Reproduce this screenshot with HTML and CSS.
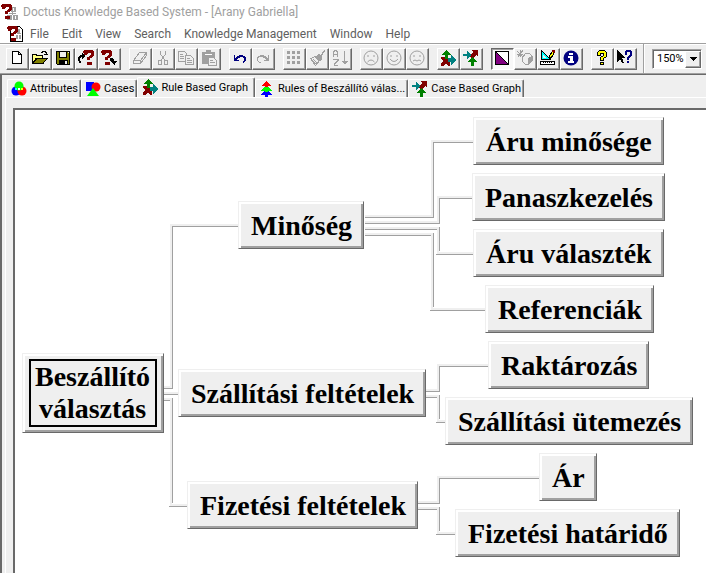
FILE: index.html
```html
<!DOCTYPE html>
<html lang="en">

<head>
  <meta charset="UTF-8">
  <meta name="viewport" content="width=device-width, initial-scale=1.0">
  <title>Doctus Knowledge Based System</title>

  <link rel="stylesheet" href="styles.css">
</head>

<body>
  <!-- Shapes used by more than one icon -->
  <svg class="shapes" aria-hidden="true">
    <symbol id="mark" viewBox="0 0 12 16">
      <path d="M1 0h9v1h1v5h-1v1H9v1H7v2H4V7h2V6h1V5h1V3H5v1H4v1H1V3H0V1h1zM4 12h5v3H4z" />
    </symbol>
    <symbol id="arrows" viewBox="0 0 16 16">
      <path fill="#800000" d="M1 7h6v2l3 3v4H8l-2-2-3 2H1v-3l2-2-2-2z" />
      <path fill="#008000" d="M6 0l5 5H8v4H5V5H1z" />
      <path fill="#008080" d="M11 5l5 5-5 5v-3H8V8h3z" />
    </symbol>
    <symbol id="arrows-in" viewBox="0 0 16 16">
      <path fill="#800000" d="M8 0h7v7l-2-2-4 4-3-3 4-4z" />
      <path fill="#008080" d="M0 4h4V1l4 4-4 4V6H0z" />
      <path fill="#008000" d="M9 7l5 5h-3v4H8v-4H4z" />
    </symbol>
  </svg>

  <header class="title-bar">
    <svg class="app-icon" viewBox="0 0 18 18">
      <g fill="#a0a0a0">
        <path d="M10 4h5v5h-5zM6 12h5v5H6zM12 12h5v5h-5zM11 9h1v3h-1zM8 10h7v1H8z" />
      </g>
      <path fill="#fff" d="M12 5h1v3h-1zM8 13h1v3H8zM14 13h1v3h-1z" />
      <use href="#mark" x="0" y="1" width="12" height="16" fill="#800000" />
    </svg>
    <span>Doctus Knowledge Based System - [Arany Gabriella]</span>
  </header>

  <nav class="menu-bar">
    <svg class="doc-icon" viewBox="0 0 16 16">
      <path fill="#fff" stroke="#000" d="M3.500 .5h9l3 3v12h-12z" />
      <path fill="#a0a0a0" d="M10 3h3v4h-3zM9 9h2v4H9zM12 9h2v4h-2zM10 7h4v1h-4z" />
      <use href="#mark" width="12" height="16" fill="#800000" />
    </svg>
    <button>File</button>
    <button>Edit</button>
    <button>View</button>
    <button>Search</button>
    <button>Knowledge Management</button>
    <button>Window</button>
    <button>Help</button>
  </nav>

  <div class="toolbar">
    <div class="group">
      <button aria-label="New"><svg viewBox="0 0 16 16">
        <path fill="#fff" stroke="#000" d="M3.500 1.500h6l3 3v9h-9zM9.500 1.500v3h3" />
      </svg></button>
      <button aria-label="Open"><svg viewBox="0 0 16 16">
        <path fill="#ffff80" stroke="#000" d="M.5 13.500v-9h4v1h6v3H4z" />
        <path fill="#808000" stroke="#000" d="M1 13.500l4-5h10l-4 5z" />
        <path fill="none" stroke="#000" d="M9 2.500h1v-1h3v1h1v2M12 4.500h4M14.500 2v3" />
      </svg></button>
      <button aria-label="Save"><svg viewBox="0 0 16 16">
        <path fill="#808000" stroke="#000" d="M1.500 1.500h13v13h-12l-1-1z" />
        <path fill="#efefef" stroke="#000" d="M4.500 1.500h7v6h-7z" />
        <path d="M4 10h9v5H4z" />
        <path fill="#efefef" d="M10 11h2v3h-2zM13 2h1v1h-1z" />
      </svg></button>
      <button aria-label="Load knowledge base"><svg viewBox="0 0 16 16">
        <use href="#mark" x="5" y="0" width="12" height="16" fill="#800000" />
        <path d="M1 13v-2H0V7h1V6h1V5h2V3h1v1h1v1h1v2H6v1H5v1H4V7H3v1H2v3h1v2z" />
      </svg></button>
      <button aria-label="Save knowledge base"><svg viewBox="0 0 16 16">
        <use href="#mark" x="0" y="0" width="12" height="16" fill="#800000" />
        <path d="M9 8h3v1h1v2h3v1h-1v1h-1v2h-1v-1h-1v-1h-1v-1h-1v-1H9z" />
      </svg></button>
    </div>

    <div class="group">
      <button disabled aria-label="Erase"><svg viewBox="0 0 16 16">
        <path d="M1.500 10.500l6-8h7l-6 8zM1.500 10.500v3h7v-3M8.500 13.500l6-8v-3" />
      </svg></button>
      <button disabled aria-label="Cut"><svg viewBox="0 0 16 16">
        <path d="M5.500 1v3l4 6M10.500 1v3l-4 6M3.500 10.500h3v4h-3zM9.500 10.500h3v4h-3z" />
      </svg></button>
      <button disabled aria-label="Copy"><svg viewBox="0 0 16 16">
        <path d="M.5 1.500h6l2 2v8h-8zM2 4.500h3M2 6.500h4M2 8.500h4" />
        <path class="paper" d="M7.500 5.500h5l3 3v6h-8zM9 8.500h3M9 10.500h5M9 12.500h5" />
      </svg></button>
      <button disabled aria-label="Paste"><svg viewBox="0 0 16 16">
        <path class="solid" d="M1 2h13v12H1zM5 0h5v3H5z" />
        <path class="paper" d="M7.500 7.500h5l3 3v5h-8zM9 10.500h3M9 12.500h5" />
        <path class="light" d="M4 4h7" />
      </svg></button>
    </div>

    <div class="group">
      <button aria-label="Undo"><svg viewBox="0 0 16 16">
        <path fill="#000080" d="M2 5h1v3h1V7h1V6h2V5h4v1h2v1h1v4h-1v1h-1v1h-1v-2h1V8h-1V7H8v1H6v1H5v1h2v1H2z" />
      </svg></button>
      <button disabled aria-label="Redo"><svg viewBox="0 0 16 16">
        <path class="solid" d="M14 5h-1v3h-1V7h-1V6H9V5H5v1H3v1H2v4h1v1h1v1h2v-1H4v-1H3V8h1V7h4v1h2v1h1v1H9v1h5z" />
      </svg></button>
    </div>

    <div class="group">
      <button disabled aria-label="Grid"><svg viewBox="0 0 16 16">
        <path class="solid" d="M1 1h3v3H1zM6 1h3v3H6zM11 1h3v3h-3zM1 6h3v3H1zM6 6h3v3H6zM11 6h3v3h-3zM1 11h3v3H1zM6 11h3v3H6zM11 11h3v3h-3z" />
      </svg></button>
      <button disabled aria-label="Format"><svg viewBox="0 0 16 16">
        <path d="M1.500 8.500l5-2 4 4-4 5zM4 9l4 4M3 10l4 4M6 7l4 4" />
        <path class="solid" d="M7 6l2-2 3 1 3-5 1 1-3 5v3l-2 2z" />
      </svg></button>
      <button disabled aria-label="Sort"><svg viewBox="0 0 16 16">
        <path d="M1.500 7V2.500l1-2h2l1 2V7M1 4.500h5M1 9.500h5v1l-4 4v1h4M12.500 1v13" />
        <path class="solid" d="M10 11h6l-3 4z" />
      </svg></button>
    </div>

    <div class="group">
      <button disabled aria-label="Bad"><svg class="round" viewBox="0 0 16 16">
        <circle cx="8" cy="8" r="7" />
        <path d="M5 5v2M11 5v2M4.500 12q3.500-4 7 0" />
      </svg></button>
      <button disabled aria-label="Good"><svg class="round" viewBox="0 0 16 16">
        <circle cx="8" cy="8" r="7" />
        <path d="M5 5v2M11 5v2M4 9q4 5 8 0" />
      </svg></button>
      <button disabled aria-label="Uncertain"><svg class="round" viewBox="0 0 16 16">
        <circle cx="8" cy="8" r="7" />
        <path d="M5 5v2M11 5v2M4 11l2-1 2 1 2-1 2 1" />
      </svg></button>
    </div>

    <div class="group">
      <button aria-label="Rule based graph"><svg viewBox="0 0 16 16"><use href="#arrows" width="16" height="16" /></svg></button>
      <button aria-label="Case based graph"><svg viewBox="0 0 16 16"><use href="#arrows-in" width="16" height="16" /></svg></button>
    </div>

    <div class="group">
      <button class="pressed" aria-label="Contrast"><svg viewBox="0 0 16 16">
        <path fill="#fff" stroke="#000" d="M1.500 1.500h13v13z" />
        <path fill="#800080" stroke="#000" d="M1.500 1.500v13h13z" />
      </svg></button>
      <button disabled aria-label="Explore"><svg viewBox="0 0 16 16">
        <path d="M0 1l6 6M6 0L1 7M3 0v7M0 4h6" />
        <path d="M5.500 7.500l3-4h4l3 3v4l-4 4h-3l-3-3z" />
        <path class="solid" d="M11 8l4-2v5l-4 4z" />
      </svg></button>
      <button aria-label="Design"><svg viewBox="0 0 16 16">
        <path fill="#00ffff" stroke="#000" d="M1.500 .5v9h9z" />
        <path fill="#efefef" d="M3 5v3h3z" />
        <path fill="#fff" stroke="#000" d="M.5 11.500h14v3H.5zM3.500 12v1M5.500 12v1M7.500 12v1M9.500 12v1M11.500 12v1" />
        <path fill="#ffff00" stroke="#000" d="M9.500 8.500v-3l3-4 2 1-3 5z" />
        <path fill="#800000" d="M12 0h3v3h-2z" />
      </svg></button>
      <button aria-label="Information"><svg class="round" viewBox="0 0 16 16">
        <circle class="info" cx="8" cy="8" r="7.500" />
        <path fill="#fff" d="M6 3h4v2H6zM5 6h5v5h1v2H5v-2h2V8H5z" />
      </svg></button>
    </div>

    <div class="group">
      <button aria-label="Help"><svg viewBox="0 0 16 16">
        <path fill="#ffff00" stroke="#000" d="M3.500 2.500l2-2h5l2 2v4l-3 2v2h-3v-3l3-2v-2h-3v2h-3zM6.500 12.500h3v2h-3z" />
      </svg></button>
      <button aria-label="Context help"><svg viewBox="0 0 16 16">
        <path d="M0 0l8 8H5l2 5H5L3 9l-3 3z" />
        <path fill="#000080" d="M8 1h1V0h5v1h1v5h-1v1h-1v1h-1v2h-2V7h1V6h1V5h1V2h-3v3H8zM10 11h2v2h-2z" />
      </svg></button>
    </div>

    <div class="zoom-box">
      <div class="combo">
        <select aria-label="Zoom">
          <option>100%</option>
          <option selected>150%</option>
          <option>200%</option>
        </select>
        <span class="combo-arrow"><svg viewBox="0 0 7 4"><path d="M0 0h7v1H6v1H5v1H4v1H3V3H2V2H1V1H0z" /></svg></span>
      </div>
    </div>
  </div>

  <main class="workspace">
    <div class="tabs" role="tablist">
      <button class="tab" role="tab">
        <svg class="round" viewBox="0 0 16 16">
          <circle cx="5" cy="10" r="4.500" fill="#0000ff" />
          <circle cx="11" cy="10" r="4.500" fill="#ff0000" />
          <circle cx="8" cy="5" r="4.500" fill="#00ff00" />
          <path fill="#fff" d="M7 7h2v2H7z" />
          <path fill="#00ffff" d="M4 7h2v2H4z" />
          <path fill="#ffff00" d="M10 7h2v2h-2z" />
        </svg>
        Attributes
      </button>
      <button class="tab" role="tab">
        <svg class="round" viewBox="0 0 16 16">
          <path fill="#0000ff" d="M1 1h8v9H1z" />
          <circle cx="11" cy="6" r="4.500" fill="#ff0000" />
          <path fill="#00ff00" d="M8 7l6 8H2z" />
        </svg>
        Cases
      </button>
      <button class="tab active" role="tab" aria-selected="true">
        <svg viewBox="0 0 16 16"><use href="#arrows" width="16" height="16" /></svg>
        Rule Based Graph
      </button>
      <button class="tab" role="tab">
        <svg viewBox="0 0 16 16">
          <path fill="#0000ff" d="M7 8l7 6H9v2H6v-2H1z" />
          <path fill="#00ff00" d="M7 4l6 6H9v1H6v-1H2z" />
          <path fill="#ff0000" d="M7 0l5 5H9v1H6V5H2z" />
        </svg>
        Rules of Beszállító válas...
      </button>
      <button class="tab" role="tab">
        <svg viewBox="0 0 16 16"><use href="#arrows-in" width="16" height="16" /></svg>
        Case Based Graph
      </button>
    </div>

    <div class="panel">
      <div class="graph">
        <svg class="links" width="691" height="463" viewBox="15 110 691 463">
          <g class="link-light">
            <path d="M164 387H171V225H238M164 393H178M164 399H171V505H187" />
            <path d="M365 216H432V141H473M365 222H438V197H472M365 228H438V253H473M365 234H432V309H485" />
            <path d="M425 390H438V365H488M425 396H438V421H445" />
            <path d="M416 502H438V477H539M416 508H438V533H455" />
          </g>
          <g class="link-dark">
            <path d="M164 388.500H172.500V226.500H238M164 394.500H178M164 400.500H170M172.500 398V503M169 506.500H187" />
            <path d="M365 217.500H433.500V142.500H473M365 223.500H439.500V198.500H472" />
            <path d="M365 229.500H437M439.500 227V251M436 254.500H473M365 235.500H431M433.500 233V307M430 310.500H485" />
            <path d="M425 391.500H439.500V366.500H488M425 397.500H437M439.500 395V419M436 422.500H445" />
            <path d="M416 503.500H439.500V478.500H539M416 509.500H437M439.500 507V531M436 534.500H455" />
          </g>
        </svg>

        <button class="node root"><span>Beszállító<br>választás</span></button>

        <button class="node quality">Minőség</button>
        <button class="node delivery">Szállítási feltételek</button>
        <button class="node payment">Fizetési feltételek</button>

        <button class="node goods-quality">Áru minősége</button>
        <button class="node complaints">Panaszkezelés</button>
        <button class="node goods-range">Áru választék</button>
        <button class="node references">Referenciák</button>
        <button class="node storage">Raktározás</button>
        <button class="node schedule">Szállítási ütemezés</button>
        <button class="node price">Ár</button>
        <button class="node deadline">Fizetési határidő</button>
      </div>
    </div>
  </main>
</body>

</html>
```
FILE: styles.css
```css
* {
  box-sizing: border-box;
}

body {
  background: #fff;
  display: flex;
  flex-direction: column;
  font-family: Roboto, "Open Sans", sans-serif;
  font-size: 12px;
  height: 100vh;
  margin: 0;
  overflow: hidden;
}

button {
  background: none;
  border: 0;
  color: inherit;
  font: inherit;
  margin: 0;
  padding: 0;
  white-space: nowrap;
}

svg {
  display: block;
  flex: none;
  shape-rendering: crispEdges;
}

.round {
  shape-rendering: auto;
}

.shapes {
  height: 0;
  position: absolute;
  width: 0;
}

/* title and menu */

.title-bar {
  align-items: center;
  color: #a0a0a0;
  display: flex;
  gap: 4px;
  height: 24px;
  padding-left: 1px;
}

.app-icon {
  height: 18px;
  width: 18px;
}

.menu-bar {
  align-items: center;
  color: #606060;
  display: flex;
  gap: 13px;
  height: 19px;
  padding-left: 7px;
}

.doc-icon {
  height: 16px;
  margin-right: -6px;
  width: 16px;
}

/* toolbar */

.toolbar {
  align-items: center;
  background: #efefef;
  border-bottom: 1px solid #a0a0a0;
  border-top: 1px solid #a0a0a0;
  box-shadow: inset 0 1px #fff;
  display: flex;
  gap: 8px;
  height: 31px;
  padding-left: 6px;
}

.group {
  display: flex;
}

.group button {
  align-items: center;
  border: 1px solid;
  border-color: #fff #696969 #696969 #fff;
  box-shadow: inset -1px -1px #a0a0a0;
  display: flex;
  height: 22px;
  justify-content: center;
  padding: 0 1px 1px 0;
  width: 23px;
}

.group svg {
  height: 16px;
  width: 16px;
}

.group button:disabled svg {
  fill: none;
  stroke: #a0a0a0;
}

.group button:disabled .solid {
  fill: #a0a0a0;
  stroke: none;
}

.group button:disabled .paper {
  fill: #efefef;
}

.group button:disabled .light {
  stroke: #fff;
}

.group .pressed {
  background: #f8f8f8;
  border-color: #696969 #fff #fff #696969;
  box-shadow: inset 1px 1px #a0a0a0;
}

.info {
  fill: #000080;
}

.zoom-box {
  align-items: center;
  align-self: stretch;
  border-left: 1px solid #fff;
  box-shadow: -1px 0 #a0a0a0;
  display: flex;
  margin-left: -1px;
  padding-left: 7px;
}

.combo {
  background: #fff;
  border: 1px solid;
  border-color: #a0a0a0 #fff #fff #a0a0a0;
  box-shadow: inset 1px 1px #696969;
  display: grid;
  height: 20px;
  width: 50px;
}

.combo select {
  appearance: none;
  background: none;
  border: 0;
  color: #000;
  font: 11px Roboto, Arial, sans-serif;
  grid-area: 1 / 1;
  padding: 0 0 0 4px;
}

.combo-arrow {
  align-items: center;
  background: #efefef;
  border: 1px solid;
  border-color: #fff #696969 #696969 #fff;
  box-shadow: inset -1px -1px #a0a0a0;
  display: flex;
  grid-area: 1 / 1;
  justify-content: center;
  justify-self: end;
  margin-top: 1px;
  pointer-events: none;
  width: 16px;
}

.combo-arrow svg {
  height: 4px;
  width: 7px;
}

/* tabs */

.workspace {
  background: #efefef;
  border-left: 2px solid #696969;
  border-top: 1px solid #696969;
  display: flex;
  flex: 1;
  flex-direction: column;
  min-height: 0;
  padding: 2px 0 0 3px;
}

.tabs {
  align-items: flex-end;
  color: #000;
  display: flex;
  font-size: 11px;
  height: 20px;
  padding-left: 2px;
}

.tab {
  align-items: center;
  border: 1px solid;
  border-bottom: 0;
  border-color: #fff #696969 #fff #fff;
  border-radius: 2px 2px 0 0;
  box-shadow: inset -1px 0 #a0a0a0;
  display: flex;
  gap: 3px;
  height: 18px;
  padding: 0 2px 0 3px;
}

.tab svg {
  height: 16px;
  width: 16px;
}

.active {
  background: #efefef;
  height: 21px;
  margin-bottom: -1px;
  padding: 0 6px 2px 4px;
}

.panel {
  border-left: 1px solid #fff;
  border-top: 1px solid #fff;
  display: flex;
  flex: 1;
  min-height: 0;
  padding: 10px 0 0 7px;
}

.graph {
  background: #fff;
  border-left: 2px solid #696969;
  border-top: 2px solid #696969;
  flex: 1;
  overflow: hidden;
  position: relative;
}

/* graph */

.links {
  fill: none;
}

.link-light {
  stroke: #efefef;
  stroke-width: 2px;
}

.link-dark {
  stroke: #a0a0a0;
}

.node {
  background: #efefef;
  border: 1px solid;
  border-color: #efefef #696969 #696969 #efefef;
  box-shadow: inset 2px 2px #fff, inset -2px -2px #a0a0a0;
  color: #000;
  font: bold 28px/32px "Liberation Serif", "Times New Roman", serif;
  padding: 8px 11px 6px 12px;
  position: absolute;
}

.root {
  left: 7px;
  padding: 5px 6px;
  top: 243px;
}

.root span {
  border: 2px solid #000;
  display: block;
  padding: 0 5px 0 4px;
}

.quality {
  left: 223px;
  top: 91px;
}

.delivery {
  left: 163px;
  top: 259px;
}

.payment {
  left: 172px;
  top: 371px;
}

.goods-quality {
  left: 458px;
  top: 7px;
}

.complaints {
  left: 457px;
  top: 63px;
}

.goods-range {
  left: 458px;
  top: 119px;
}

.references {
  left: 470px;
  top: 175px;
}

.storage {
  left: 473px;
  top: 231px;
}

.schedule {
  left: 430px;
  top: 287px;
}

.price {
  left: 524px;
  top: 343px;
}

.deadline {
  left: 440px;
  top: 399px;
}
```
